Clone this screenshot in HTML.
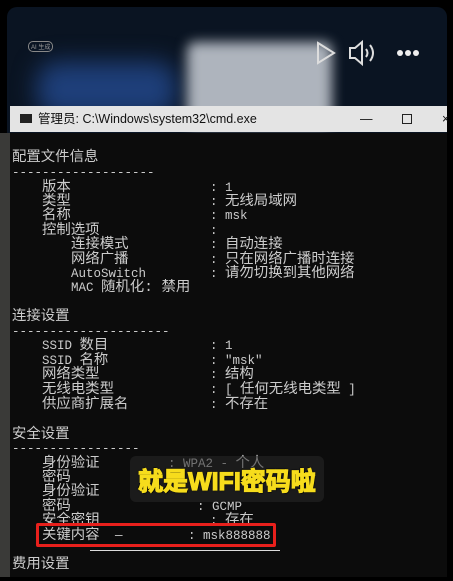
<!DOCTYPE html>
<html><head><meta charset="utf-8"><style>
*{margin:0;padding:0;box-sizing:border-box}
body{width:453px;height:577px;background:#000;overflow:hidden;position:relative;font-family:"Liberation Mono","Noto Sans CJK SC",monospace}
.panel{position:absolute;left:7px;top:7px;width:440px;height:570px;border-radius:10px;overflow:hidden;background:#0a1422}
.blur1{position:absolute;left:180px;top:35px;width:145px;height:85px;background:#aeb4bd;filter:blur(6px);border-radius:8px}
.blur2{position:absolute;left:30px;top:55px;width:140px;height:55px;background:#1e3f7a;filter:blur(12px);border-radius:20px}
.title{position:absolute;left:10px;top:106px;width:437px;height:26px;background:#e4e4e4;font-family:"Liberation Sans","Noto Sans CJK SC",sans-serif;font-size:12.5px;color:#111;line-height:26px}
.term{position:absolute;left:10px;top:133px;width:437px;height:444px;background:#0c0c0c}
.w{position:absolute;left:0;top:4px;width:453px;height:577px}
.l{position:absolute;color:#cccccc;font-size:12.5px;line-height:15px;white-space:pre}
.c{font-size:14.4px}
.red{position:absolute;left:36px;top:523px;width:240px;height:24px;border:3px solid #e8201c;border-radius:2px}
.cap{position:absolute;left:130px;top:456px;width:194px;height:46px;background:rgba(40,40,40,.55);border-radius:6px}
.capt{position:absolute;left:138px;top:462px;font-family:"Liberation Sans","Noto Sans CJK SC",sans-serif;font-weight:700;font-size:25px;color:#f6dc1c;-webkit-text-stroke:1.2px #f6dc1c;text-shadow:0 0 2px #000,1px 1px 0 #000,-1px -1px 0 #000}
</style></head><body>
<div class="panel"><div class="blur2"></div><div class="blur1"></div>
<div style="position:absolute;left:21px;top:34px;border:1px solid #888;border-radius:5px;font:6px 'Liberation Sans','Noto Sans CJK SC',sans-serif;color:#999;padding:0 2px">AI 生成</div>
<svg style="position:absolute;left:303px;top:32px" width="130" height="30" viewBox="0 0 130 30"><path d="M8 4 L24 14 L8 24 Z" fill="none" stroke="#ddd" stroke-width="2"/><path d="M40 9h5l7-6v22l-7-6h-5z" fill="none" stroke="#ddd" stroke-width="2"/><path d="M56 10q3 4 0 8M60 6q6 8 0 16" fill="none" stroke="#ddd" stroke-width="2"/><circle cx="90" cy="14" r="3" fill="#eee"/><circle cx="98" cy="14" r="3" fill="#eee"/><circle cx="106" cy="14" r="3" fill="#eee"/></svg>
</div>
<div class="title"><span style="position:absolute;left:10px;top:8px;width:12px;height:9px;background:#222"></span><span style="position:absolute;left:28px">管理员: C:\Windows\system32\cmd.exe</span><span style="position:absolute;left:350px;top:0">—</span><span style="position:absolute;left:392px;top:8px;width:10px;height:10px;border:1px solid #222"></span><span style="position:absolute;left:432px">×</span></div>
<div class="term"></div>
<div style="position:absolute;left:0;top:133px;width:10px;height:444px;background:#3a3a38"></div>
<div class="w">
<div class="l c" style="left:12px;top:147px">配置文件信息</div>
<div class="l" style="left:12px;top:162px">-------------------</div>
<div class="l c" style="left:42px;top:177px">版本</div><div class="l" style="left:210px;top:177px">: 1</div>
<div class="l c" style="left:42px;top:191px">类型</div><div class="l" style="left:210px;top:191px">: <span class="c">无线局域网</span></div>
<div class="l c" style="left:42px;top:205px">名称</div><div class="l" style="left:210px;top:205px">: msk</div>
<div class="l c" style="left:42px;top:220px">控制选项</div><div class="l" style="left:210px;top:220px">:</div>
<div class="l c" style="left:71px;top:234px">连接模式</div><div class="l" style="left:210px;top:234px">: <span class="c">自动连接</span></div>
<div class="l c" style="left:71px;top:249px">网络广播</div><div class="l" style="left:210px;top:249px">: <span class="c">只在网络广播时连接</span></div>
<div class="l" style="left:71px;top:263px">AutoSwitch</div><div class="l" style="left:210px;top:263px">: <span class="c">请勿切换到其他网络</span></div>
<div class="l" style="left:71px;top:277px">MAC <span class="c">随机化: 禁用</span></div>

<div class="l c" style="left:12px;top:306px">连接设置</div>
<div class="l" style="left:12px;top:321px">---------------------</div>
<div class="l" style="left:42px;top:335px">SSID <span class="c">数目</span></div><div class="l" style="left:210px;top:335px">: 1</div>
<div class="l" style="left:42px;top:350px">SSID <span class="c">名称</span></div><div class="l" style="left:210px;top:350px">: "msk"</div>
<div class="l c" style="left:42px;top:364px">网络类型</div><div class="l" style="left:210px;top:364px">: <span class="c">结构</span></div>
<div class="l c" style="left:42px;top:379px">无线电类型</div><div class="l" style="left:210px;top:379px">: [ <span class="c">任何无线电类型</span> ]</div>
<div class="l c" style="left:42px;top:394px">供应商扩展名</div><div class="l" style="left:210px;top:394px">: <span class="c">不存在</span></div>

<div class="l c" style="left:12px;top:424px">安全设置</div>
<div class="l" style="left:12px;top:438px">-----------------</div>
<div class="l c" style="left:42px;top:453px">身份验证</div><div class="l" style="left:168px;top:453px">: WPA2 - <span class="c">个人</span></div>
<div class="l c" style="left:42px;top:467px">密码</div>
<div class="l c" style="left:42px;top:481px">身份验证</div>
<div class="l c" style="left:42px;top:496px">密码</div><div class="l" style="left:197px;top:496px">: GCMP</div>
<div class="l c" style="left:42px;top:510px">安全密钥</div><div class="l" style="left:210px;top:510px">: <span class="c">存在</span></div>
<div class="l c" style="left:42px;top:525px">关键内容</div><div class="l" style="left:115px;top:525px">—</div><div class="l" style="left:188px;top:525px">: msk888888</div>
<div class="l c" style="left:12px;top:554px">费用设置</div>
</div>
<div class="red"></div>
<div style="position:absolute;left:90px;top:550px;width:190px;height:1px;background:#ddd"></div>
<div class="cap"></div>
<div class="capt">就是WIFI密码啦</div>
</body></html>
